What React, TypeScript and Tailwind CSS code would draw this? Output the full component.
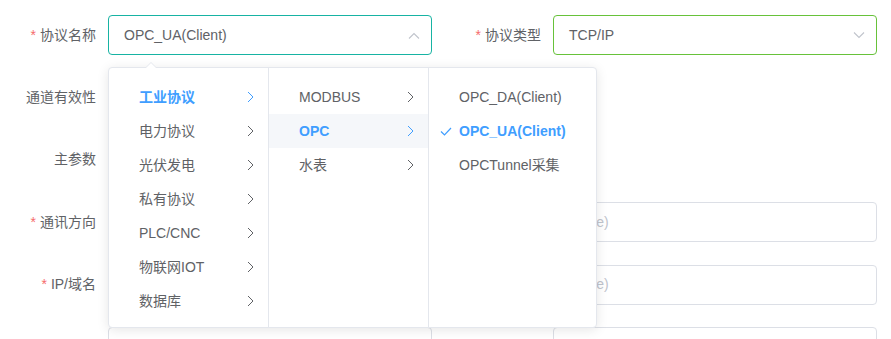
import React from 'react';

const FONT = '"Liberation Sans", "Noto Sans CJK SC", sans-serif';

// cascader columns, active path: 工业协议 > OPC > OPC_UA(Client)
const col1 = ['工业协议', '电力协议', '光伏发电', '私有协议', 'PLC/CNC', '物联网IOT', '数据库'];
const col2 = ['MODBUS', 'OPC', '水表'];
const col3 = ['OPC_DA(Client)', 'OPC_UA(Client)', 'OPCTunnel采集'];

function ChevronRight({ active }: { active?: boolean }) {
  return (
    <svg width="7" height="12" viewBox="0 0 7 12" className="shrink-0">
      <path
        d="M1 1l5 5-5 5"
        fill="none"
        stroke={active ? '#409eff' : '#606266'}
        strokeWidth="1"
      />
    </svg>
  );
}

function Chevron({ up }: { up?: boolean }) {
  return (
    <svg width="12" height="7" viewBox="0 0 12 7">
      <path d={up ? 'M1 6.5l5-5 5 5' : 'M1 0.5l5 5 5-5'} fill="none" stroke="#c0c4cc" strokeWidth="1.1" />
    </svg>
  );
}

function Label({ text, required }: { text?: string; required?: boolean }) {
  return (
    <div className="w-[108px] shrink-0 pr-3 h-10 flex items-center justify-end text-[14px] text-[#606266]">
      {required && <span className="text-[#f56c6c] mr-1">*</span>}
      {text}
    </div>
  );
}

function Input({ placeholder }: { placeholder?: string }) {
  return (
    <div className="w-[324px] h-10 rounded border border-[#dcdfe6] bg-white flex items-center px-[15px] text-[14px] text-[#c0c4cc]">
      {placeholder}
    </div>
  );
}

export default function App() {
  return (
    <div className="relative w-[891px] h-[339px] bg-white overflow-hidden" style={{ fontFamily: FONT }}>
      <div className="flex flex-col gap-[22.4px] pt-[15px]">
        {/* row 1 */}
        <div className="flex">
          <Label text="协议名称" required />
          <div className="w-[324px] h-10 rounded border border-[#17b3a3] flex items-center justify-between pl-[15px] pr-[11px] text-[14px] text-[#606266]">
            <span>OPC_UA(Client)</span>
            <Chevron up />
          </div>
          <div className="ml-[13px] flex">
            <Label text="协议类型" required />
            <div className="w-[324px] h-10 rounded border border-[#67c23a] flex items-center justify-between pl-[15px] pr-[11px] text-[14px] text-[#606266]">
              <span>TCP/IP</span>
              <Chevron />
            </div>
          </div>
        </div>
        {/* row 2 */}
        <div className="flex">
          <Label text="通道有效性" />
        </div>
        {/* row 3 */}
        <div className="flex">
          <Label text="主参数" />
        </div>
        {/* row 4 */}
        <div className="flex">
          <Label text="通讯方向" required />
          <Input />
          <div className="ml-[13px] flex">
            <Label text="端口号" required />
            <Input placeholder="(Type)" />
          </div>
        </div>
        {/* row 5 */}
        <div className="flex">
          <Label text="IP/域名" required />
          <Input />
          <div className="ml-[13px] flex">
            <Label text="站号" required />
            <Input placeholder="(Type)" />
          </div>
        </div>
        {/* row 6, mostly below the fold */}
        <div className="flex">
          <Label />
          <Input />
          <div className="ml-[13px] flex">
            <Label />
            <Input />
          </div>
        </div>
      </div>

      {/* cascader dropdown */}
      <div className="absolute left-[108px] top-[67px] h-[261px] flex bg-white border border-[#e4e7ed] rounded shadow-[0_2px_12px_rgba(0,0,0,0.1)] text-[14px]">
        <div className="absolute -top-[6px] left-[36px] w-0 h-0 border-x-[6px] border-x-transparent border-b-[6px] border-b-[#e4e7ed]" />
        <div className="absolute -top-[5px] left-[37px] w-0 h-0 border-x-[5px] border-x-transparent border-b-[5px] border-b-white" />

        <div className="w-[160px] border-r border-[#e4e7ed] pt-[12px]">
          {col1.map((t, i) => (
            <div key={t} className="h-[34px] flex items-center justify-between pl-[30px] pr-[14px]">
              <span className={i === 0 ? 'text-[#409eff] font-bold' : 'text-[#606266]'}>{t}</span>
              <ChevronRight active={i === 0} />
            </div>
          ))}
        </div>
        <div className="w-[160px] border-r border-[#e4e7ed] pt-[12px]">
          {col2.map((t, i) => (
            <div
              key={t}
              className={`h-[34px] flex items-center justify-between pl-[30px] pr-[14px] ${i === 1 ? 'bg-[#f5f7fa]' : ''}`}
            >
              <span className={i === 1 ? 'text-[#409eff] font-bold' : 'text-[#606266]'}>{t}</span>
              <ChevronRight active={i === 1} />
            </div>
          ))}
        </div>
        <div className="w-[167px] pt-[12px]">
          {col3.map((t, i) => (
            <div key={t} className="h-[34px] flex items-center pl-[11px]">
              <span className="w-[19px] shrink-0">
                {i === 1 && (
                  <svg width="12" height="9" viewBox="0 0 12 9">
                    <path d="M1 4.5l3.5 3.5L11 1" fill="none" stroke="#409eff" strokeWidth="1.2" />
                  </svg>
                )}
              </span>
              <span className={i === 1 ? 'text-[#409eff] font-bold' : 'text-[#606266]'}>{t}</span>
            </div>
          ))}
        </div>
      </div>
    </div>
  );
}
